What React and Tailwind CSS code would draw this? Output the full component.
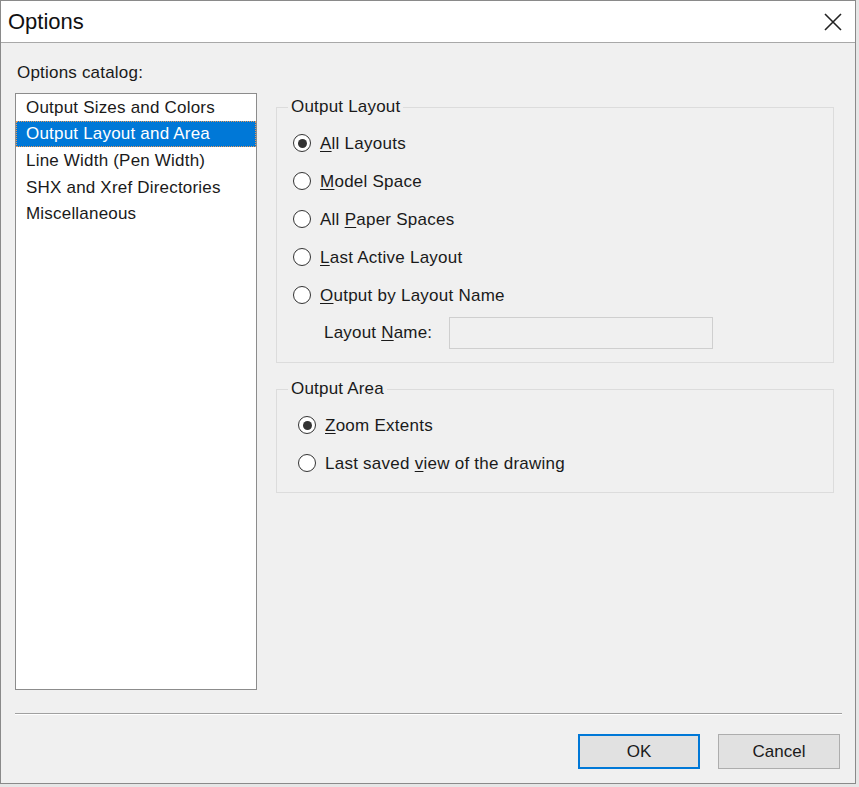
import React from "react";

const font = { fontFamily: '"Liberation Sans", Arial, sans-serif' };

function U({ children }) {
  return <span className="underline underline-offset-2 decoration-1">{children}</span>;
}

function Radio({ checked, children, className = "" }) {
  return (
    <div className={"flex items-center h-[24px] " + className}>
      <div className="w-[18px] h-[18px] rounded-full border-[1.5px] border-[#333333] bg-white flex items-center justify-center shrink-0">
        {checked && <div className="w-[9px] h-[9px] rounded-full bg-[#333333]" />}
      </div>
      <span className="ml-[9px] text-[17px] tracking-[0.25px] text-[#1a1a1a] leading-none">{children}</span>
    </div>
  );
}

function Group({ title, children, className = "" }) {
  return (
    <div className={"relative border border-[#dcdcdc] " + className}>
      <div className="absolute -top-[11px] left-[11px] px-[3px] bg-[#f0f0f0] text-[17px] tracking-[0.2px] leading-[20px] text-[#1a1a1a]">
        {title}
      </div>
      {children}
    </div>
  );
}

export default function App() {
  const items = [
    "Output Sizes and Colors",
    "Output Layout and Area",
    "Line Width (Pen Width)",
    "SHX and Xref Directories",
    "Miscellaneous",
  ];
  return (
    <div className="w-[859px] h-[787px] bg-[#e6e6e6] overflow-hidden" style={font}>
      <div className="w-[856px] h-[784px] flex flex-col bg-[#f0f0f0] border border-[#8a8a8a]">
        <div className="h-[42px] bg-white border-b border-[#a8a8a8] flex items-center justify-between shrink-0">
          <span className="ml-[7px] text-[22px] text-[#111]">Options</span>
          <svg width="18" height="18" viewBox="0 0 18 18" className="mr-[13px]">
            <path d="M1 1 L17 17 M17 1 L1 17" stroke="#222" strokeWidth="1.6" />
          </svg>
        </div>
        <div className="flex-1 flex flex-col px-[14px]">
          <div className="mt-[20px] ml-[2px] text-[17px] tracking-[0.2px] leading-[20px] text-[#1a1a1a]">Options catalog:</div>
          <div className="flex mt-[10px]">
            <div className="w-[242px] h-[597px] bg-white border border-[#8c8c8c] shrink-0">
              {items.map((t, i) =>
                i === 1 ? (
                  <div
                    key={t}
                    className="h-[26.7px] flex items-center pl-[9px] bg-[#0078d7] text-white border border-dotted border-[#e89a5a] text-[17px] tracking-[0.2px]"
                  >
                    {t}
                  </div>
                ) : (
                  <div key={t} className="h-[26.7px] flex items-center pl-[10px] text-[#1a1a1a] text-[17px] tracking-[0.2px]">
                    {t}
                  </div>
                )
              )}
            </div>
            <div className="ml-[19px] w-[558px] pt-[14px] flex flex-col">
              <Group title="Output Layout" className="h-[256px]">
                <div className="pl-[16px] pt-[23px] flex flex-col gap-[14px]">
                  <Radio checked><U>A</U>ll Layouts</Radio>
                  <Radio>
                    <U>M</U>odel Space
                  </Radio>
                  <Radio>
                    All <U>P</U>aper Spaces
                  </Radio>
                  <Radio>
                    <U>L</U>ast Active Layout
                  </Radio>
                  <Radio>
                    <U>O</U>utput by Layout Name
                  </Radio>
                </div>
                <div className="flex items-center mt-[10px] pl-[47px]">
                  <span className="text-[17px] tracking-[0.2px] text-[#1a1a1a] w-[125px]">
                    Layout <U>N</U>ame:
                  </span>
                  <div className="w-[264px] h-[32px] bg-[#f0f0f0] border border-[#cfcfcf]" />
                </div>
              </Group>
              <Group title="Output Area" className="h-[104px] mt-[26px]">
                <div className="pl-[21px] pt-[23px] flex flex-col gap-[14px]">
                  <Radio checked>
                    <U>Z</U>oom Extents
                  </Radio>
                  <Radio>
                    Last saved <U>v</U>iew of the drawing
                  </Radio>
                </div>
              </Group>
            </div>
          </div>
          <div className="mt-[23px] mr-[-1px] h-[2px] border-t border-[#a0a0a0] bg-white" />
          <div className="flex justify-end mt-[19px] mr-[1px] gap-[18px]">
            <button className="w-[122px] h-[35px] bg-[#e1e1e1] border-2 border-[#0078d7] text-[17px] text-[#1a1a1a]">
              OK
            </button>
            <button className="w-[122px] h-[35px] bg-[#e1e1e1] border border-[#adadad] text-[17px] text-[#1a1a1a]">
              Cancel
            </button>
          </div>
        </div>
      </div>
    </div>
  );
}
